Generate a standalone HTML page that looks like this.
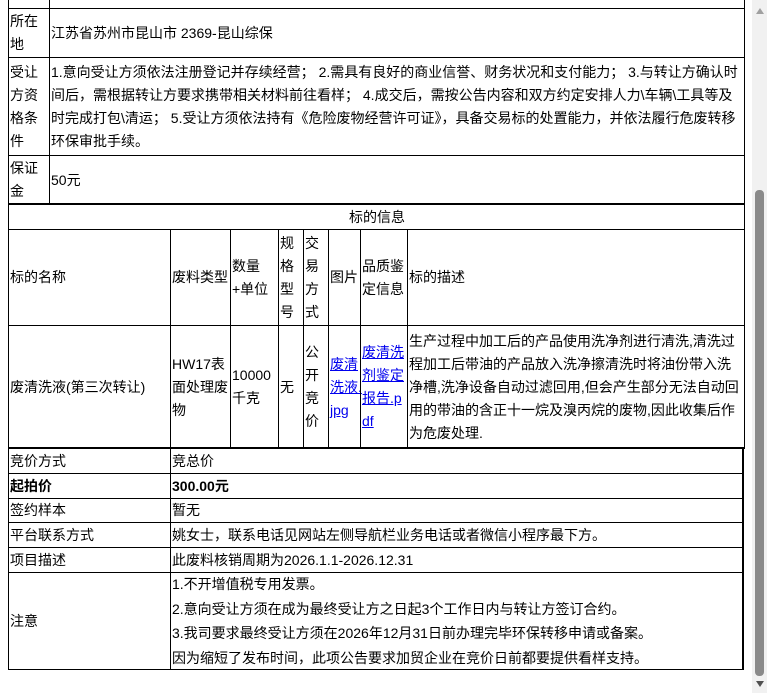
<!DOCTYPE html>
<html><head><meta charset="utf-8"><style>
body{margin:0;width:767px;height:693px;overflow:hidden;background:#fff;position:relative;font-family:"Liberation Sans","Noto Sans CJK SC",sans-serif;font-size:14px;color:#000}
.c{position:absolute;border:1px solid #000;box-sizing:border-box;display:flex;align-items:center;padding-left:1px;line-height:23px;white-space:nowrap}
.t{position:absolute;background:#000}
a{color:#00e;text-decoration:underline}
</style></head><body>
<div class="c" style="left:8px;top:-20px;width:42px;height:29px"></div>
<div class="c" style="left:49px;top:-20px;width:696px;height:29px"></div>
<div class="c" style="left:8px;top:8px;width:42px;height:50px">所在<br>地</div>
<div class="c" style="left:49px;top:8px;width:696px;height:50px">江苏省苏州市昆山市 2369-昆山综保</div>
<div class="c" style="left:8px;top:57px;width:42px;height:99px">受让<br>方资<br>格条<br>件</div>
<div class="c" style="left:49px;top:57px;width:696px;height:99px;overflow:hidden">1.意向受让方须依法注册登记并存续经营； 2.需具有良好的商业信誉、财务状况和支付能力； 3.与转让方确认时<br>间后，需根据转让方要求携带相关材料前往看样； 4.成交后，需按公告内容和双方约定安排人力\车辆\工具等及<br>时完成打包\清运； 5.受让方须依法持有《危险废物经营许可证》，具备交易标的处置能力，并依法履行危废转移<br>环保审批手续。</div>
<div class="c" style="left:8px;top:155px;width:42px;height:50px">保证<br>金</div>
<div class="c" style="left:49px;top:155px;width:696px;height:50px">50元</div>
<div class="t" style="left:8px;top:203px;width:737px;height:2px"></div>
<div class="c" style="left:8px;top:204px;width:737px;height:26px;justify-content:center">标的信息</div>
<div class="c" style="left:8px;top:229px;width:163px;height:97px">标的名称</div>
<div class="c" style="left:170px;top:229px;width:61px;height:97px">废料类型</div>
<div class="c" style="left:230px;top:229px;width:49px;height:97px">数量<br>+单位</div>
<div class="c" style="left:278px;top:229px;width:26px;height:97px">规<br>格<br>型<br>号</div>
<div class="c" style="left:303px;top:229px;width:26px;height:97px">交<br>易<br>方<br>式</div>
<div class="c" style="left:328px;top:229px;width:33px;height:97px">图片</div>
<div class="c" style="left:360px;top:229px;width:48px;height:97px">品质鉴<br>定信息</div>
<div class="c" style="left:407px;top:229px;width:338px;height:97px">标的描述</div>
<div class="c" style="left:8px;top:325px;width:163px;height:124px">废清洗液(第三次转让)</div>
<div class="c" style="left:170px;top:325px;width:61px;height:124px">HW17表<br>面处理废<br>物</div>
<div class="c" style="left:230px;top:325px;width:49px;height:124px">10000<br>千克</div>
<div class="c" style="left:278px;top:325px;width:26px;height:124px">无</div>
<div class="c" style="left:303px;top:325px;width:26px;height:124px">公<br>开<br>竞<br>价</div>
<div class="c" style="left:328px;top:325px;width:33px;height:124px"><a>废清<br>洗液.<br>jpg</a></div>
<div class="c" style="left:360px;top:325px;width:48px;height:124px"><a>废清洗<br>剂鉴定<br>报告.p<br>df</a></div>
<div class="c" style="left:407px;top:325px;width:338px;height:124px;overflow:hidden">生产过程中加工后的产品使用洗净剂进行清洗,清洗过<br>程加工后带油的产品放入洗净擦清洗时将油份带入洗<br>净槽,洗净设备自动过滤回用,但会产生部分无法自动回<br>用的带油的含正十一烷及溴丙烷的废物,因此收集后作<br>为危废处理.</div>
<div class="t" style="left:8px;top:447px;width:736px;height:2px"></div>
<div class="c" style="left:8px;top:448px;width:163px;height:26px">竞价方式</div>
<div class="c" style="left:170px;top:448px;width:574px;height:26px">竞总价</div>
<div class="c" style="left:8px;top:473px;width:163px;height:26px;font-weight:bold">起拍价</div>
<div class="c" style="left:170px;top:473px;width:574px;height:26px;font-weight:bold">300.00元</div>
<div class="c" style="left:8px;top:498px;width:163px;height:25px">签约样本</div>
<div class="c" style="left:170px;top:498px;width:574px;height:25px">暂无</div>
<div class="c" style="left:8px;top:522px;width:163px;height:26px">平台联系方式</div>
<div class="c" style="left:170px;top:522px;width:574px;height:26px">姚女士，联系电话见网站左侧导航栏业务电话或者微信小程序最下方。</div>
<div class="c" style="left:8px;top:547px;width:163px;height:26px">项目描述</div>
<div class="c" style="left:170px;top:547px;width:574px;height:26px">此废料核销周期为2026.1.1-2026.12.31</div>
<div class="c" style="left:8px;top:572px;width:163px;height:98px">注意</div>
<div class="c" style="left:170px;top:572px;width:574px;height:98px;line-height:24.5px">1.不开增值税专用发票。<br>2.意向受让方须在成为最终受让方之日起3个工作日内与转让方签订合约。<br>3.我司要求最终受让方须在2026年12月31日前办理完毕环保转移申请或备案。<br>因为缩短了发布时间，此项公告要求加贸企业在竞价日前都要提供看样支持。</div>
<div class="t" style="left:742px;top:448px;width:2px;height:222px"></div>
<div style="position:absolute;left:752px;top:0;width:15px;height:693px;background:#f1f1f1"></div>
<div style="position:absolute;left:755px;top:190px;width:9px;height:486px;background:#8a8a8a;border-radius:4px"></div>
<div style="position:absolute;left:756px;top:8px;width:0;height:0;border-left:4px solid transparent;border-right:4px solid transparent;border-bottom:6px solid #a0a0a0"></div>
<div style="position:absolute;left:756px;top:681px;width:0;height:0;border-left:4px solid transparent;border-right:4px solid transparent;border-top:6px solid #505050"></div>
</body></html>
